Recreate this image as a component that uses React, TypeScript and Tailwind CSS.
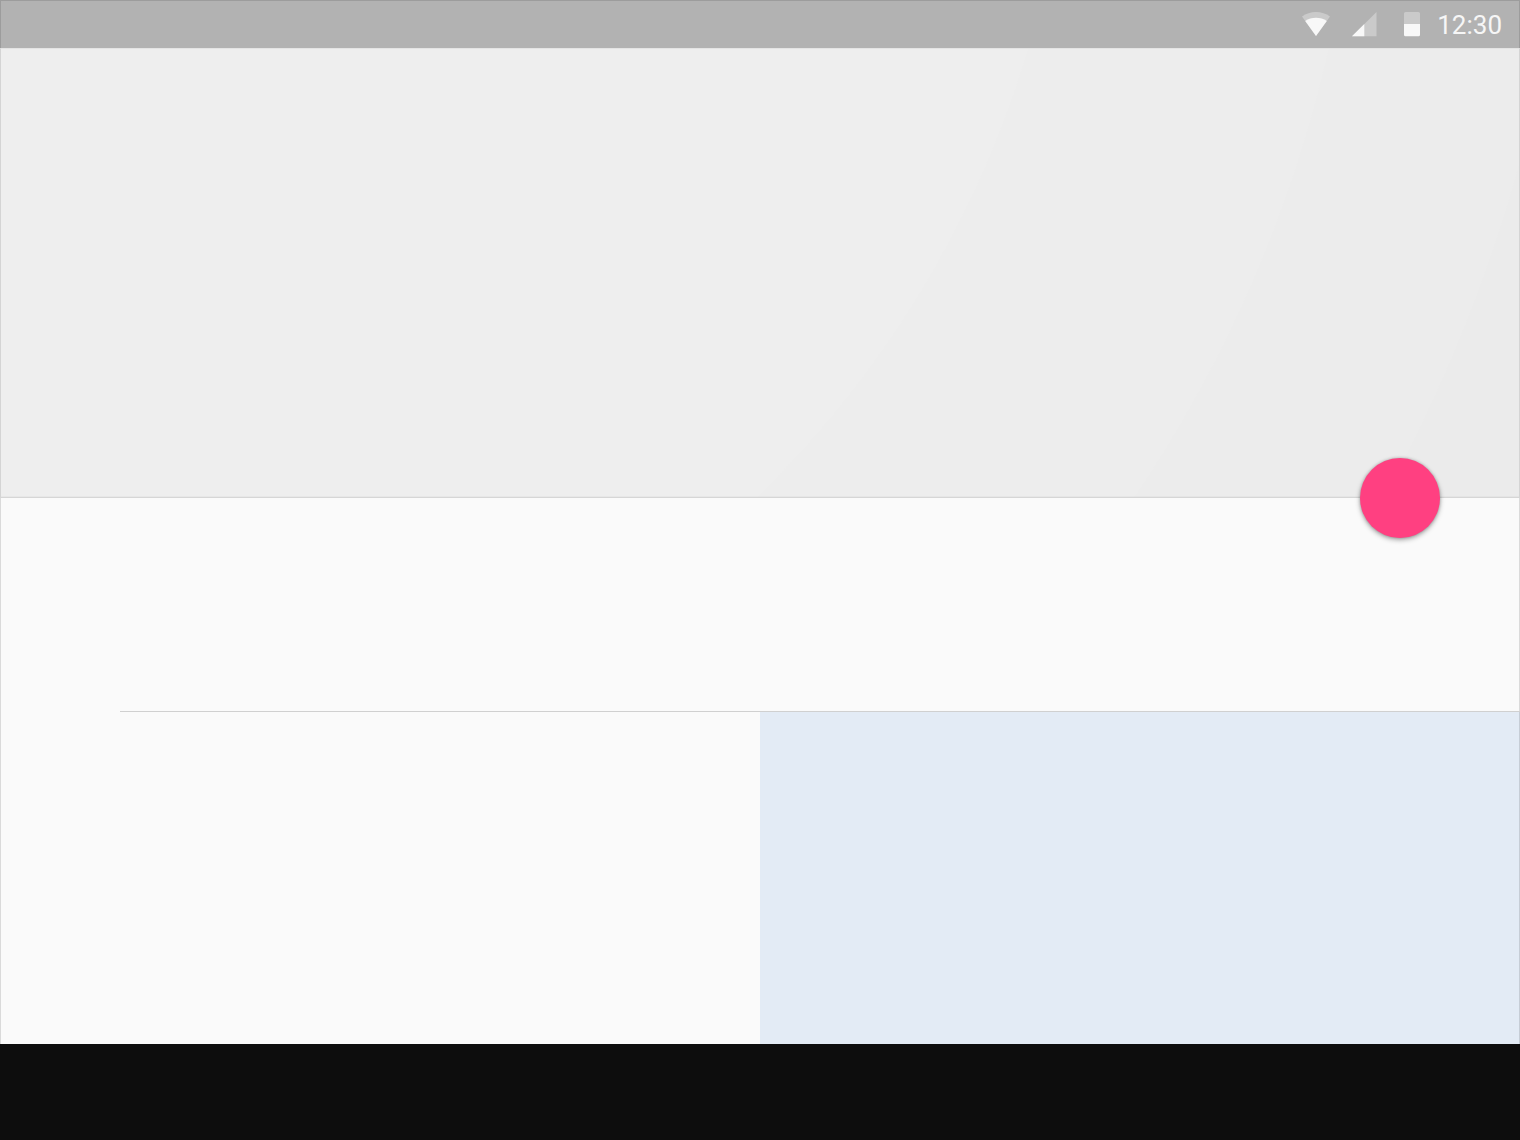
function StatusBar() {
  return (
    <header className="flex h-12 shrink-0 items-center justify-end border-x border-t border-[#9c9c9c] bg-[#b2b2b2] pr-[17px] text-[#f8f8f8]">
      <div className="mb-px flex items-center">
        <svg className="mr-[22px] h-6 w-7" viewBox="0 0 28 24">
          <path d="M14 24 0 4.500C4 1.600 8.800 0 14 0s10 1.600 14 4.500Z" fill="#cacaca" />
          <path d="M14 24 3.200 9C6.300 6.900 10 5.800 14 5.800s7.700 1.100 10.800 3.200Z" fill="currentColor" />
        </svg>
        <svg className="mr-[27px] h-[25px] w-[25px] -mb-px" viewBox="0 0 25 25">
          <path d="M24.500 0v24.300H0Z" fill="#cacaca" />
          <path d="M12.300 12v12.300H0Z" fill="currentColor" />
        </svg>
        <svg className="mr-[17px] -mb-px h-[25px] w-4" viewBox="0 0 16 25">
          <path d="M1.500 0h13A1.500 1.500 0 0 1 16 1.500V12H0V1.500A1.500 1.500 0 0 1 1.500 0Z" fill="#cacaca" />
          <path d="M0 12h16v10.800a1.500 1.500 0 0 1-1.500 1.500h-13A1.500 1.500 0 0 1 0 22.800Z" fill="currentColor" />
        </svg>
      </div>
      <time className="font-['Roboto',sans-serif] text-[26px] leading-none text-[#f6f6f6]">12:30</time>
    </header>
  );
}

export default function App() {
  return (
    <div className="flex h-[1140px] w-[1520px] flex-col overflow-hidden bg-[#fafafa]">
      <StatusBar />
      <main className="flex min-h-0 flex-1 flex-col">
        <section className="relative h-[450px] shrink-0 border border-t-[#e4e4e4] border-x-[#d4d4d4] border-b-[#d6d6d6] bg-[radial-gradient(circle_at_35px_-294px,#eeeeee_1034px,#ededed_1035px,#ededed_1325px,#ececec_1326px,#ececec_1538px,#ebebeb_1539px)] shadow-[inset_0_-1px_1px_rgba(0,0,0,0.03)]">
          <button
            aria-label="Action"
            className="absolute right-[79px] -bottom-[41px] size-20 rounded-full bg-[#ff4081] shadow-[0_2px_5px_rgba(0,0,0,0.34),0_0_3px_rgba(0,0,0,0.2)]"
          />
        </section>
        <section className="flex h-[214px] shrink-0 flex-col justify-end border-x border-[#dadada]">
          <div className="ml-[119px] -mr-px h-px bg-[#d0d0d0]" />
        </section>
        <section className="grid flex-1 grid-cols-2">
          <div className="border-l border-[#dadada]" />
          <div className="border-r border-[#c6cdd6] bg-[#e3ebf5]" />
        </section>
      </main>
      <footer className="h-24 shrink-0 bg-[#0d0d0d]" />
    </div>
  );
}
